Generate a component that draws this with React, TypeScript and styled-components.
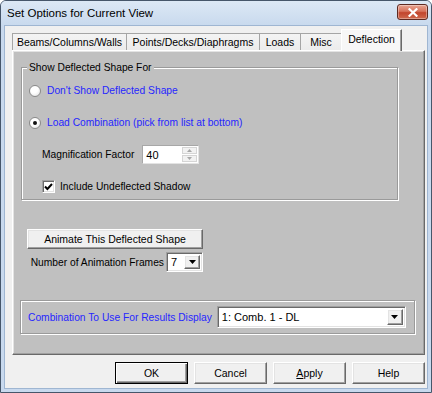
import styled, { createGlobalStyle, css } from "styled-components";

const GlobalStyle = createGlobalStyle`
  html, body {
    margin: 0;
    padding: 0;
    background: #ffffff;
  }
  body {
    font-family: "Liberation Sans", Arial, sans-serif;
    font-size: 10.25px;
    color: #000;
  }
`;

const raised = css`
  border: 1px solid;
  border-color: #ffffff #696969 #696969 #ffffff;
  box-shadow: inset -1px -1px 0 #a0a0a0, inset 1px 1px 0 #e3e3e3;
`;

const sunken = css`
  border: 1px solid;
  border-color: #a0a0a0 #ffffff #ffffff #a0a0a0;
  box-shadow: inset 1px 1px 0 #696969, inset -1px -1px 0 #e3e3e3;
`;

const Window = styled.div`
  width: 432px;
  height: 393px;
  box-sizing: border-box;
  display: flex;
  flex-direction: column;
  border: 1px solid #46566a;
  border-radius: 6px 6px 0 0;
  background: #c8d9ee;
  overflow: hidden;
`;

const TitleBar = styled.div`
  height: 24px;
  flex: none;
  display: flex;
  align-items: center;
  justify-content: space-between;
  padding: 0 3px 0 6px;
  background: linear-gradient(#dce8f5, #c9daee);
  font-size: 11.5px;
  color: #000;
`;

const CloseButton = styled.div`
  width: 31px;
  height: 16px;
  box-sizing: border-box;
  margin-top: -2px;
  border: 1px solid #5e2a22;
  border-radius: 3px;
  background: linear-gradient(#e8a593, #d7735c 45%, #c2452d 55%, #cf6a4e);
  display: flex;
  align-items: center;
  justify-content: center;
  box-shadow: inset 0 0 0 1px rgba(255, 255, 255, 0.35);
`;

const Client = styled.div`
  flex: 1;
  margin: 0 3px 3px 3px;
  background: #f0f0f0;
  border: 1px solid #9fb6d2;
  display: flex;
  flex-direction: column;
  padding: 3px 2px 0 7px;
`;

const TabStrip = styled.div`
  height: 21px;
  display: flex;
  align-items: flex-end;
  position: relative;
  z-index: 1;
  font-size: 10.5px;
`;

const Tab = styled.div<{ $w: number; $active?: boolean }>`
  width: ${(p) => p.$w}px;
  box-sizing: border-box;
  height: 17px;
  margin-left: -1px;
  display: flex;
  align-items: center;
  justify-content: center;
  border: 1px solid #a5a5a5;
  border-bottom: none;
  background: linear-gradient(#f4f4f4, #ececec);
  white-space: nowrap;
  &:first-child {
    margin-left: 0;
  }
  ${(p) =>
    p.$active &&
    css`
      height: 22px;
      margin-bottom: -1px;
      padding-bottom: 3px;
      background: #f7f7f7;
      border-color: #ffffff #696969 #f7f7f7 #ffffff;
      box-shadow: inset -1px 0 0 #a0a0a0;
    `}
`;

const Panel = styled.div`
  height: 305px;
  box-sizing: border-box;
  background: #c0c0c0;
  ${raised};
  display: flex;
  flex-direction: column;
  padding-left: 8px;
`;

const etched = css`
  border: 1px solid #9a9a9a;
  box-shadow: inset 1px 1px 0 #ffffff, 1px 1px 0 #ffffff;
`;

const GroupBox = styled.fieldset`
  margin: 10px 0 0 0;
  width: 377px;
  box-sizing: border-box;
  ${etched};
  padding: 6px 0 2px 7px;
  display: flex;
  flex-direction: column;
  gap: 11px;
  min-width: 0;
`;

const Legend = styled.legend`
  padding: 0 2px;
  margin-left: -2px;
  line-height: 13px;
  background: #c0c0c0;
`;

const Row = styled.div<{ $indent?: number; $gap?: number }>`
  height: 21px;
  display: flex;
  align-items: center;
  gap: ${(p) => p.$gap ?? 6}px;
  margin-left: ${(p) => p.$indent ?? 0}px;
`;

const Radio = styled.span<{ $checked?: boolean }>`
  width: 12px;
  height: 12px;
  box-sizing: border-box;
  border-radius: 50%;
  border: 1px solid #8a8a8a;
  background: radial-gradient(circle at 40% 35%, #ffffff 40%, #dcdcdc);
  display: flex;
  align-items: center;
  justify-content: center;
  &::after {
    content: "";
    width: 4px;
    height: 4px;
    border-radius: 50%;
    background: ${(p) => (p.$checked ? "#111" : "transparent")};
  }
`;

const BlueLabel = styled.span`
  color: #2626ff;
  white-space: nowrap;
`;

const Label = styled.span`
  white-space: nowrap;
`;

const SpinBox = styled.div`
  width: 57px;
  height: 19px;
  box-sizing: border-box;
  background: #fff;
  border: 1px solid;
  border-color: #a7a7a7 #e3e3e3 #e3e3e3 #a7a7a7;
  display: flex;
  align-items: center;
  padding: 0 1px 0 3px;
  font-size: 11px;
`;

const SpinValue = styled.span`
  flex: 1;
`;

const SpinButtons = styled.div`
  width: 15px;
  height: 15px;
  display: flex;
  flex-direction: column;
  gap: 1px;
`;

const SpinButton = styled.div`
  flex: 1;
  background: #f2f2f2;
  border: 1px solid #d5d5d5;
  display: flex;
  align-items: center;
  justify-content: center;
`;

const Check = styled.span`
  width: 13px;
  height: 13px;
  box-sizing: border-box;
  background: #fff;
  ${sunken};
  display: flex;
  align-items: center;
  justify-content: center;
`;

const AnimateBlock = styled.div`
  width: 176px;
  margin: 29px 0 0 6px;
  display: flex;
  flex-direction: column;
  gap: 3px;
`;

const PushButton = styled.button<{ $w?: number; $h?: number; $default?: boolean }>`
  width: ${(p) => (p.$w ? `${p.$w}px` : "100%")};
  height: ${(p) => p.$h ?? 20}px;
  box-sizing: border-box;
  font: inherit;
  font-size: 10.5px;
  color: #000;
  background: #f0f0f0;
  padding: 0;
  ${raised};
  ${(p) =>
    p.$default &&
    css`
      border-color: #000;
      box-shadow: inset 1px 1px 0 #ffffff, inset -1px -1px 0 #696969,
        inset -2px -2px 0 #a0a0a0;
    `}
  u {
    text-decoration: underline;
  }
`;

const FramesRow = styled.div`
  height: 20px;
  display: flex;
  align-items: center;
  justify-content: flex-end;
  gap: 2px;
`;

const Combo = styled.div<{ $w: number; $h: number }>`
  width: ${(p) => p.$w}px;
  height: ${(p) => p.$h}px;
  box-sizing: border-box;
  background: #fff;
  ${sunken};
  display: flex;
  align-items: center;
  padding: 2px 2px 2px 4px;
  font-size: 11px;
`;

const ComboText = styled.span`
  flex: 1;
  white-space: nowrap;
`;

const ComboArrow = styled.div`
  width: 16px;
  align-self: stretch;
  box-sizing: border-box;
  background: #f0f0f0;
  ${raised};
  display: flex;
  align-items: center;
  justify-content: center;
`;

const ResultsGroup = styled.div`
  margin: 28px 0 0 -1px;
  width: 395px;
  height: 34px;
  box-sizing: border-box;
  ${etched};
  display: flex;
  align-items: center;
  gap: 5px;
  padding-left: 7px;
`;

const ButtonRow = styled.div`
  margin-top: 7px;
  display: flex;
  justify-content: flex-end;
  gap: 6px;
`;

function DownTriangle() {
  return (
    <svg width="7" height="4" viewBox="0 0 7 4">
      <path d="M0 0h7L3.5 4z" fill="#000" />
    </svg>
  );
}

function SpinArrow({ up }: { up?: boolean }) {
  return (
    <svg width="5" height="3" viewBox="0 0 5 3">
      <path d={up ? "M0 3h5L2.5 0z" : "M0 0h5L2.5 3z"} fill="#a8a8a8" />
    </svg>
  );
}

export default function App() {
  return (
    <>
      <GlobalStyle />
      <Window>
        <TitleBar>
          <span>Set Options for Current View</span>
          <CloseButton>
            <svg width="10" height="9" viewBox="0 0 10 9">
              <path
                d="M1.5 1.2L8.5 7.8M8.5 1.2L1.5 7.8"
                stroke="#fff"
                strokeWidth="2.2"
                strokeLinecap="square"
              />
            </svg>
          </CloseButton>
        </TitleBar>
        <Client>
          <TabStrip>
            <Tab $w={115}>Beams/Columns/Walls</Tab>
            <Tab $w={134}>Points/Decks/Diaphragms</Tab>
            <Tab $w={42}>Loads</Tab>
            <Tab $w={42}>Misc</Tab>
            <Tab $w={61} $active>
              Deflection
            </Tab>
          </TabStrip>
          <Panel>
            <GroupBox>
              <Legend>Show Deflected Shape For</Legend>
              <Row>
                <Radio />
                <BlueLabel>Don't Show Deflected Shape</BlueLabel>
              </Row>
              <Row>
                <Radio $checked />
                <BlueLabel>Load Combination (pick from list at bottom)</BlueLabel>
              </Row>
              <Row $indent={13} $gap={8}>
                <Label>Magnification Factor</Label>
                <SpinBox>
                  <SpinValue>40</SpinValue>
                  <SpinButtons>
                    <SpinButton>
                      <SpinArrow up />
                    </SpinButton>
                    <SpinButton>
                      <SpinArrow />
                    </SpinButton>
                  </SpinButtons>
                </SpinBox>
              </Row>
              <Row $indent={13} $gap={5}>
                <Check>
                  <svg width="9" height="8" viewBox="0 0 9 8">
                    <path
                      d="M1 3.5L3.4 6L8 1"
                      stroke="#000"
                      strokeWidth="2"
                      fill="none"
                    />
                  </svg>
                </Check>
                <Label>Include Undeflected Shadow</Label>
              </Row>
            </GroupBox>

            <AnimateBlock>
              <PushButton>Animate This Deflected Shape</PushButton>
              <FramesRow>
                <Label>Number of Animation Frames</Label>
                <Combo $w={37} $h={20}>
                  <ComboText>7</ComboText>
                  <ComboArrow>
                    <DownTriangle />
                  </ComboArrow>
                </Combo>
              </FramesRow>
            </AnimateBlock>

            <ResultsGroup>
              <BlueLabel>Combination To Use For Results Display</BlueLabel>
              <Combo $w={189} $h={22}>
                <ComboText>1: Comb. 1 - DL</ComboText>
                <ComboArrow>
                  <DownTriangle />
                </ComboArrow>
              </Combo>
            </ResultsGroup>
          </Panel>
          <ButtonRow>
            <PushButton $w={73} $h={22} $default>
              OK
            </PushButton>
            <PushButton $w={73} $h={22}>
              Cancel
            </PushButton>
            <PushButton $w={73} $h={22}>
              <u>A</u>pply
            </PushButton>
            <PushButton $w={73} $h={22}>
              Help
            </PushButton>
          </ButtonRow>
        </Client>
      </Window>
    </>
  );
}
